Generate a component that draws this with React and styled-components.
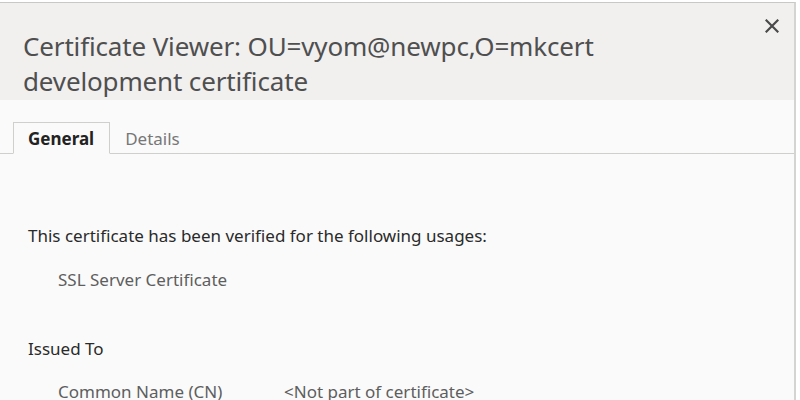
import React, { useState } from "react";
import styled, { createGlobalStyle } from "styled-components";

const GlobalStyle = createGlobalStyle`
	html, body {
		margin: 0;
		padding: 0;
		background: #ffffff;
	}
	body {
		font-family: "Noto Sans", "Open Sans", sans-serif;
	}
`;

const Dialog = styled.div`
	box-sizing: border-box;
	width: 796px;
	height: 400px;
	margin-top: 2px;
	border-top: 1px solid #c8c8c6;
	border-right: 2px solid #d4d4d2;
	background: #fafafa;
	overflow: hidden;
`;

const Header = styled.div`
	position: relative;
	box-sizing: border-box;
	height: 97px;
	padding: 26px 60px 0 23px;
	background: #f1f0ef;
`;

const Title = styled.h1`
	max-width: 640px;
	margin: 0;
	font-size: 26px;
	font-weight: 400;
	line-height: 35px;
	letter-spacing: -0.15px;
	color: #4f4f4f;
`;

const CloseButton = styled.button`
	position: absolute;
	top: 12px;
	right: 11px;
	width: 22px;
	height: 22px;
	padding: 0;
	border: none;
	background: none;
	display: flex;
	align-items: center;
	justify-content: center;
	cursor: pointer;
`;

const TabBar = styled.div`
	display: flex;
	margin-top: 22px;
	padding-left: 13px;
	border-bottom: 1px solid #cfcfcd;
`;

const Tab = styled.div`
	box-sizing: border-box;
	height: 32px;
	margin-bottom: -1px;
	padding: 0 15px 0 14px;
	display: flex;
	align-items: center;
	font-size: 17px;
	font-weight: ${(p) => (p.active ? 700 : 400)};
	color: ${(p) => (p.active ? "#222222" : "#777777")};
	background: ${(p) => (p.active ? "#fafafa" : "transparent")};
	border: 1px solid ${(p) => (p.active ? "#cfcfcd" : "transparent")};
	border-bottom-color: ${(p) => (p.active ? "#fafafa" : "transparent")};
	cursor: pointer;
`;

const Content = styled.div`
	padding: 71px 0 0 28px;
`;

const Heading = styled.div`
	font-size: 17px;
	line-height: 22px;
	color: #2a2a2a;
`;

const Usage = styled.div`
	margin: 22px 0 0 30px;
	font-size: 17px;
	line-height: 22px;
	color: #5e5e5e;
`;

const Section = styled.div`
	margin-top: ${(p) => p.gap || 0}px;
`;

const FieldRow = styled.div`
	display: grid;
	grid-template-columns: 226px 1fr;
	margin: 21px 0 0 30px;
	font-size: 17px;
	line-height: 22px;
	color: #5e5e5e;
`;

const CloseIcon = () => (
	<svg width="14" height="14" viewBox="0 0 14 14">
		<path d="M1.5 1.5 L12.5 12.5 M12.5 1.5 L1.5 12.5" stroke="#4a4a4a" strokeWidth="2.2" strokeLinecap="square" />
	</svg>
);

const App = () => {
	const [tab, setTab] = useState("general");

	return (
		<>
			<GlobalStyle />
			<Dialog>
				<Header>
					<Title>
						Certificate Viewer: OU=vyom@newpc,O=mkcert development certificate
					</Title>
					<CloseButton aria-label="Close">
						<CloseIcon />
					</CloseButton>
				</Header>
				<TabBar>
					<Tab active={tab === "general"} onClick={() => setTab("general")}>
						General
					</Tab>
					<Tab active={tab === "details"} onClick={() => setTab("details")}>
						Details
					</Tab>
				</TabBar>
				<Content>
					<Heading>This certificate has been verified for the following usages:</Heading>
					<Usage>SSL Server Certificate</Usage>
					<Section gap={47}>
						<Heading>Issued To</Heading>
						<FieldRow>
							<span>Common Name (CN)</span>
							<span>&lt;Not part of certificate&gt;</span>
						</FieldRow>
					</Section>
				</Content>
			</Dialog>
		</>
	);
};

export default App;
